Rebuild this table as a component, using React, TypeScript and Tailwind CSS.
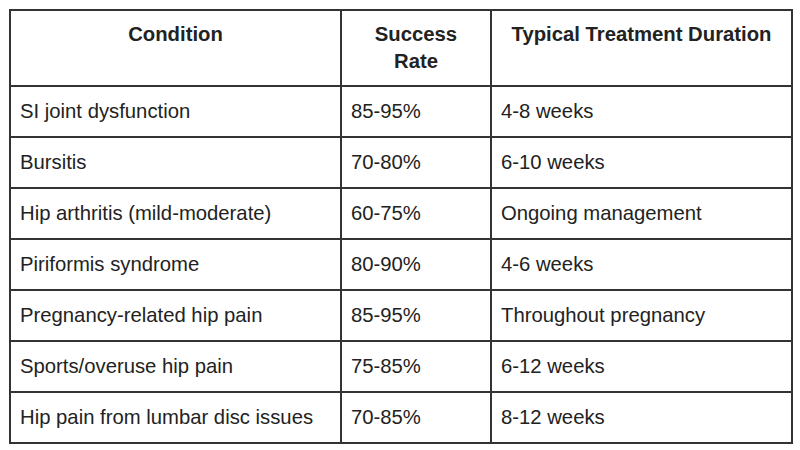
const rows = [
  ["SI joint dysfunction", "85-95%", "4-8 weeks"],
  ["Bursitis", "70-80%", "6-10 weeks"],
  ["Hip arthritis (mild-moderate)", "60-75%", "Ongoing management"],
  ["Piriformis syndrome", "80-90%", "4-6 weeks"],
  ["Pregnancy-related hip pain", "85-95%", "Throughout pregnancy"],
  ["Sports/overuse hip pain", "75-85%", "6-12 weeks"],
  ["Hip pain from lumbar disc issues", "70-85%", "8-12 weeks"],
];

const headers = ["Condition", "Success Rate", "Typical Treatment Duration"];

export default function App() {
  return (
    <div
      className="w-[800px] h-[450px] bg-white pt-[9px] pl-[9px] text-[#222] text-[20.3px]"
      style={{ fontFamily: '"Liberation Sans", Arial, sans-serif' }}
    >
      <div className="inline-grid grid-cols-[329px_148px_299px] gap-[2px] border-2 border-[#333] bg-[#333]">
        {headers.map((h) => (
          <div
            key={h}
            className="bg-white px-[9px] py-[10px] leading-[27px] font-bold text-center"
          >
            {h === "Success Rate" ? (
              <>
                Success
                <br />
                Rate
              </>
            ) : (
              h
            )}
          </div>
        ))}
        {rows.map((r) =>
          r.map((cell, i) => (
            <div
              key={r[0] + i}
              className="bg-white px-[9px] pt-[11px] pb-[11px] leading-[27px]"
            >
              {cell}
            </div>
          ))
        )}
      </div>
    </div>
  );
}
